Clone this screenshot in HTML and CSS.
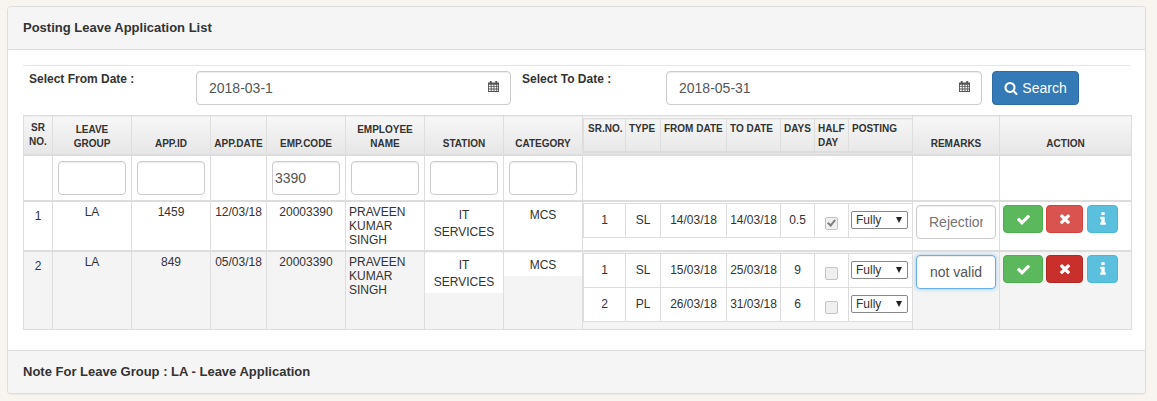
FILE: index.html
```html
<!DOCTYPE html>
<html lang="en">
  <head>
    <meta charset="UTF-8" />
    <title>Posting Leave Application List</title>
    <link rel="stylesheet" href="styles.css">
  </head>
  <body>
    <svg class="sprite" width="0" height="0">
      <symbol id="i-search" viewBox="0 0 1792 1792"><path d="M1216 832q0-185-131.5-316.5t-316.5-131.5-316.5 131.5-131.5 316.5 131.5 316.5 316.5 131.5 316.5-131.5 131.5-316.5zm512 832q0 52-38 90t-90 38q-54 0-90-38l-343-342q-179 124-399 124-143 0-273.5-55.5t-225-150-150-225-55.5-273.5 55.5-273.5 150-225 225-150 273.5-55.5 273.5 55.5 225 150 150 225 55.5 273.5q0 220-124 399l343 343q37 37 37 90z"/></symbol>
      <symbol id="i-check" viewBox="0 0 1792 1792"><path d="M1671 566q0 40-28 68l-724 724-136 136q-28 28-68 28t-68-28l-136-136-362-362q-28-28-28-68t28-68l136-136q28-28 68-28t68 28l294 295 656-657q28-28 68-28t68 28l136 136q28 28 28 68z"/></symbol>
      <symbol id="i-times" viewBox="0 0 1408 1792"><path d="M1298 1214q0 40-28 68l-136 136q-28 28-68 28t-68-28l-294-294-294 294q-28 28-68 28t-68-28l-136-136q-28-28-28-68t28-68l294-294-294-294q-28-28-28-68t28-68l136-136q28-28 68-28t68 28l294 294 294-294q28-28 68-28t68 28l136 136q28 28 28 68t-28 68l-294 294 294 294q28 28 28 68z"/></symbol>
      <symbol id="i-info" viewBox="0 0 640 1792"><path d="M640 1344v128q0 26-19 45t-45 19h-512q-26 0-45-19t-19-45v-128q0-26 19-45t45-19h64v-384h-64q-26 0-45-19t-19-45v-128q0-26 19-45t45-19h384q26 0 45 19t19 45v576h64q26 0 45 19t19 45zm-128-1152v192q0 26-19 45t-45 19h-256q-26 0-45-19t-19-45v-192q0-26 19-45t45-19h256q26 0 45 19t19 45z"/></symbol>
      <symbol id="i-cal" viewBox="0 0 12 12"><path d="M2 0h2v1.5h4V0h2v1.5h2V12H0V1.5h2zM1 4v1.6h2V4zm3 0v1.6h2V4zm3 0v1.6h2V4zm3 0v1.6h1V4zM1 6.6v1.6h2V6.6zm3 0v1.6h2V6.6zm3 0v1.6h2V6.6zm3 0v1.6h1V6.6zM1 9.2V11h2V9.2zm3 0V11h2V9.2zm3 0V11h2V9.2zm3 0V11h1V9.2z" fill-rule="evenodd"/></symbol>
    </svg>

    <div class="panel">
      <div class="panel-heading">Posting Leave Application List</div>
      <div class="panel-body">
        <hr />
        <form class="date-form">
          <label class="date-label" for="fromDate">Select From Date :</label>
          <div class="date-field">
            <input type="text" id="fromDate" class="form-control" value="2018-03-1" />
            <svg class="cal-icon"><use href="#i-cal"/></svg>
          </div>
          <label class="date-label date-label-to" for="toDate">Select To Date :</label>
          <div class="date-field">
            <input type="text" id="toDate" class="form-control" value="2018-05-31" />
            <svg class="cal-icon"><use href="#i-cal"/></svg>
          </div>
          <button type="button" class="btn btn-search"><svg class="btn-icon"><use href="#i-search"/></svg>Search</button>
        </form>

        <table class="leave-table">
          <colgroup>
            <col class="c-sr" /><col class="c-wide" /><col class="c-wide" /><col class="c-date" /><col class="c-wide" /><col class="c-wide" /><col class="c-wide" /><col class="c-wide" /><col class="c-detail" /><col class="c-remarks" /><col class="c-action" />
          </colgroup>
          <thead>
            <tr>
              <th class="th-sr">SR<br />NO.</th>
              <th>LEAVE<br />GROUP</th>
              <th>APP.ID</th>
              <th>APP.DATE</th>
              <th>EMP.CODE</th>
              <th>EMPLOYEE<br />NAME</th>
              <th>STATION</th>
              <th>CATEGORY</th>
              <th class="th-detail">
                <table class="detail-table detail-head">
                  <colgroup>
                    <col class="d-sr" /><col class="d-type" /><col class="d-date" /><col class="d-to" /><col class="d-days" /><col class="d-half" /><col class="d-post" />
                  </colgroup>
                  <tr>
                    <th>SR.NO.</th><th>TYPE</th><th>FROM DATE</th><th>TO DATE</th><th>DAYS</th><th>HALF<br />DAY</th><th>POSTING</th>
                  </tr>
                </table>
              </th>
              <th>REMARKS</th>
              <th>ACTION</th>
            </tr>
          </thead>
          <tbody>
            <tr class="filter-row">
              <td></td>
              <td><input type="text" class="form-control filter-input" /></td>
              <td><input type="text" class="form-control filter-input" /></td>
              <td></td>
              <td><input type="text" class="form-control filter-input" value="3390" /></td>
              <td><input type="text" class="form-control filter-input" /></td>
              <td><input type="text" class="form-control filter-input" /></td>
              <td><input type="text" class="form-control filter-input" /></td>
              <td></td>
              <td></td>
              <td></td>
            </tr>
            <tr class="data-row">
              <td class="center sr-cell">1</td>
              <td class="center">LA</td>
              <td class="center">1459</td>
              <td class="center">12/03/18</td>
              <td class="center">20003390</td>
              <td>PRAVEEN KUMAR SINGH</td>
              <td class="nested-cell"><div class="nested">IT<br />SERVICES</div></td>
              <td class="nested-cell"><div class="nested">MCS</div></td>
              <td class="detail-cell">
                <table class="detail-table">
                  <colgroup>
                    <col class="d-sr" /><col class="d-type" /><col class="d-date" /><col class="d-to" /><col class="d-days" /><col class="d-half" /><col class="d-post" />
                  </colgroup>
                  <tr>
                    <td>1</td><td>SL</td><td>14/03/18</td><td>14/03/18</td><td>0.5</td>
                    <td><input type="checkbox" class="half-check" checked disabled /></td>
                    <td><div class="posting"><select><option>Fully</option></select></div></td>
                  </tr>
                </table>
              </td>
              <td class="remarks-cell"><input type="text" class="form-control remarks-input" placeholder="Rejection" /></td>
              <td class="action-cell">
                <div class="actions">
                  <button type="button" class="btn btn-ok"><svg class="a-check"><use href="#i-check"/></svg></button>
                  <button type="button" class="btn btn-reject"><svg class="a-times"><use href="#i-times"/></svg></button>
                  <button type="button" class="btn btn-info"><svg class="a-info"><use href="#i-info"/></svg></button>
                </div>
              </td>
            </tr>
            <tr class="data-row row-alt">
              <td class="center sr-cell">2</td>
              <td class="center">LA</td>
              <td class="center">849</td>
              <td class="center">05/03/18</td>
              <td class="center">20003390</td>
              <td>PRAVEEN KUMAR SINGH</td>
              <td class="nested-cell"><div class="nested">IT<br />SERVICES</div></td>
              <td class="nested-cell"><div class="nested">MCS</div></td>
              <td class="detail-cell">
                <table class="detail-table">
                  <colgroup>
                    <col class="d-sr" /><col class="d-type" /><col class="d-date" /><col class="d-to" /><col class="d-days" /><col class="d-half" /><col class="d-post" />
                  </colgroup>
                  <tr>
                    <td>1</td><td>SL</td><td>15/03/18</td><td>25/03/18</td><td>9</td>
                    <td><input type="checkbox" class="half-check" disabled /></td>
                    <td><div class="posting"><select><option>Fully</option></select></div></td>
                  </tr>
                  <tr>
                    <td>2</td><td>PL</td><td>26/03/18</td><td>31/03/18</td><td>6</td>
                    <td><input type="checkbox" class="half-check" disabled /></td>
                    <td><div class="posting"><select><option>Fully</option></select></div></td>
                  </tr>
                </table>
              </td>
              <td class="remarks-cell"><input type="text" class="form-control remarks-input is-focus" value="not valid" /></td>
              <td class="action-cell">
                <div class="actions">
                  <button type="button" class="btn btn-ok"><svg class="a-check"><use href="#i-check"/></svg></button>
                  <button type="button" class="btn btn-reject is-active"><svg class="a-times"><use href="#i-times"/></svg></button>
                  <button type="button" class="btn btn-info"><svg class="a-info"><use href="#i-info"/></svg></button>
                </div>
              </td>
            </tr>
          </tbody>
        </table>
      </div>
      <div class="panel-footer">Note For Leave Group : LA - Leave Application</div>
    </div>
  </body>
</html>
```

FILE: styles.css
```css
*,
*::before,
*::after {
  box-sizing: border-box;
}

body {
  margin: 0;
  padding: 6px 11px 8px 7px;
  background-color: #f8f5f0;
  font-family: "Liberation Sans", Arial, sans-serif;
  font-size: 12px;
  color: #333;
}

.sprite {
  display: block;
  height: 0;
}

.panel {
  background-color: #fff;
  border: 1px solid #ddd;
  border-radius: 4px;
  box-shadow: 0 1px 1px rgba(0, 0, 0, 0.05);
}

.panel-heading {
  height: 43px;
  padding: 0 15px;
  line-height: 41px;
  font-size: 13px;
  font-weight: bold;
  background-color: #f5f5f5;
  border-bottom: 1px solid #ddd;
  border-radius: 3px 3px 0 0;
}

.panel-body {
  padding: 15px 15px 20px;
}

hr {
  margin: 0 0 5px;
  border: 0;
  border-top: 1px solid #e5e5e5;
}

.panel-footer {
  height: 43px;
  padding: 0 15px;
  line-height: 41px;
  font-size: 13px;
  font-weight: bold;
  background-color: #f5f5f5;
  border-top: 1px solid #ddd;
  border-radius: 0 0 3px 3px;
}

.date-form {
  display: grid;
  grid-template-columns: 173px 315px 155px 316px 87px;
  column-gap: 0;
  margin-bottom: 10px;
}

.date-label {
  padding: 1px 0 0 6px;
  font-weight: bold;
  line-height: 14px;
}

.date-label-to {
  padding-left: 11px;
}

.date-field {
  position: relative;
}

.form-control {
  display: block;
  width: 100%;
  height: 34px;
  padding: 6px 12px;
  font-family: inherit;
  font-size: 14px;
  color: #555;
  background-color: #fff;
  border: 1px solid #ccc;
  border-radius: 4px;
  box-shadow: inset 0 1px 1px rgba(0, 0, 0, 0.075);
  outline: none;
}

.cal-icon {
  position: absolute;
  top: 10px;
  right: 12px;
  width: 11px;
  height: 11px;
  fill: #555;
}

.btn {
  display: flex;
  align-items: center;
  justify-content: center;
  padding: 0;
  font-family: inherit;
  border: 1px solid transparent;
  border-radius: 4px;
  color: #fff;
  cursor: pointer;
}

.btn svg {
  fill: #fff;
}

.btn-search {
  margin-left: 10px;
  width: 87px;
  height: 34px;
  font-size: 14px;
  background-color: #337ab7;
  border-color: #2e6da4;
}

.btn-icon {
  width: 14px;
  height: 14px;
  margin-right: 4px;
}

.leave-table {
  width: 1108px;
  table-layout: fixed;
  border-collapse: collapse;
}

.c-sr { width: 29px; }
.c-wide { width: 79px; }
.c-date { width: 56px; }
.c-detail { width: 330px; }
.c-remarks { width: 87px; }
.c-action { width: 132px; }

.leave-table th,
.leave-table td {
  border: 1px solid #ddd;
}

.leave-table > thead > tr > th {
  height: 39px;
  padding: 5px 2px 3px;
  font-size: 10px;
  line-height: 14px;
  text-align: center;
  vertical-align: bottom;
  background-image: linear-gradient(#f7f7f7, #e6e6e6);
  border-bottom: 2px solid #ddd;
}

.leave-table > thead > tr > .th-sr {
  padding-bottom: 5px;
}

.leave-table > thead > tr > .th-detail {
  padding: 2px 0 0;
  vertical-align: top;
}

.filter-row td {
  height: 45px;
  padding: 5px;
}

.filter-input {
  padding: 6px 2px;
}

.data-row > td {
  padding: 3px;
  line-height: 14px;
  vertical-align: top;
  border-top: 2px solid #ddd;
}

.row-alt > td {
  background-color: #f4f4f4;
}

.center {
  text-align: center;
}

.leave-table > tbody > .data-row > .sr-cell {
  padding-top: 7px;
}

.leave-table > tbody > .data-row > .nested-cell {
  padding: 1px 0 0;
}

.leave-table > tbody > .data-row > .detail-cell {
  padding: 1px 0 7px;
}

.nested {
  padding: 4px 4px 2px;
  text-align: center;
  line-height: 17px;
  background-color: #fff;
}

.detail-table {
  width: 329px;
  table-layout: fixed;
  border-collapse: collapse;
}

.d-sr { width: 42px; }
.d-type { width: 35px; }
.d-date { width: 66px; }
.d-to { width: 54px; }
.d-days { width: 34px; }
.d-half { width: 34px; }
.d-post { width: 64px; }

.detail-head th {
  height: 33px;
  padding: 3px 3px 0;
  font-size: 10px;
  line-height: 14px;
  text-align: left;
  vertical-align: top;
  white-space: nowrap;
  background-image: linear-gradient(#f5f5f5, #e8e8e8);
  border-bottom: 2px solid #ddd;
}

.detail-head th:first-child {
  padding-left: 4px;
}

.detail-cell .detail-table td {
  height: 34px;
  padding: 9px 0 0;
  line-height: 14px;
  text-align: center;
  vertical-align: top;
  background-color: #fff;
}

.half-check {
  display: block;
  position: relative;
  width: 13px;
  height: 13px;
  margin: 4px auto 0;
  background-color: #efefef;
  border: 1px solid #c4c4c4;
  border-radius: 2px;
  appearance: none;
}

.half-check:checked::after {
  content: "";
  position: absolute;
  top: 0;
  left: 3px;
  width: 5px;
  height: 8px;
  border-right: 2px solid #808080;
  border-bottom: 2px solid #808080;
  transform: rotate(40deg);
}

.posting {
  position: relative;
  width: 57px;
  height: 18px;
  margin: -2px 0 0 2px;
}

.posting select {
  display: block;
  width: 100%;
  height: 18px;
  padding: 0 0 0 4px;
  font-family: inherit;
  font-size: 12px;
  color: #333;
  background-color: #fff;
  border: 1px solid #888;
  border-radius: 2px;
  appearance: none;
}

.posting::after {
  content: "";
  position: absolute;
  top: 6px;
  right: 6px;
  border-left: 3px solid transparent;
  border-right: 3px solid transparent;
  border-top: 6px solid #222;
}

.leave-table > tbody > .data-row > .remarks-cell {
  padding: 3px 3px 0;
}

.remarks-input {
  text-align: center;
}

.remarks-input.is-focus {
  border-color: #66afe9;
  box-shadow: inset 0 1px 1px rgba(0, 0, 0, 0.075), 0 0 4px rgba(102, 175, 233, 0.6);
}

.leave-table > tbody > .data-row > .action-cell {
  padding: 3px 3px 0;
}

.actions {
  display: flex;
  gap: 3px;
}

.actions .btn {
  height: 28px;
}

.btn-ok {
  width: 40px;
  background-color: #5cb85c;
  border-color: #4cae4c;
}

.btn-reject {
  width: 37px;
  background-color: #d9534f;
  border-color: #d43f3a;
}

.btn-reject.is-active {
  background-color: #c9302c;
  border-color: #ac2925;
}

.btn-info {
  width: 31px;
  margin-left: 1px;
  background-color: #5bc0de;
  border-color: #46b8da;
}

.a-check { width: 15px; height: 15px; }
.a-times { width: 12px; height: 15px; }
.a-info { width: 6px; height: 16px; }
```
